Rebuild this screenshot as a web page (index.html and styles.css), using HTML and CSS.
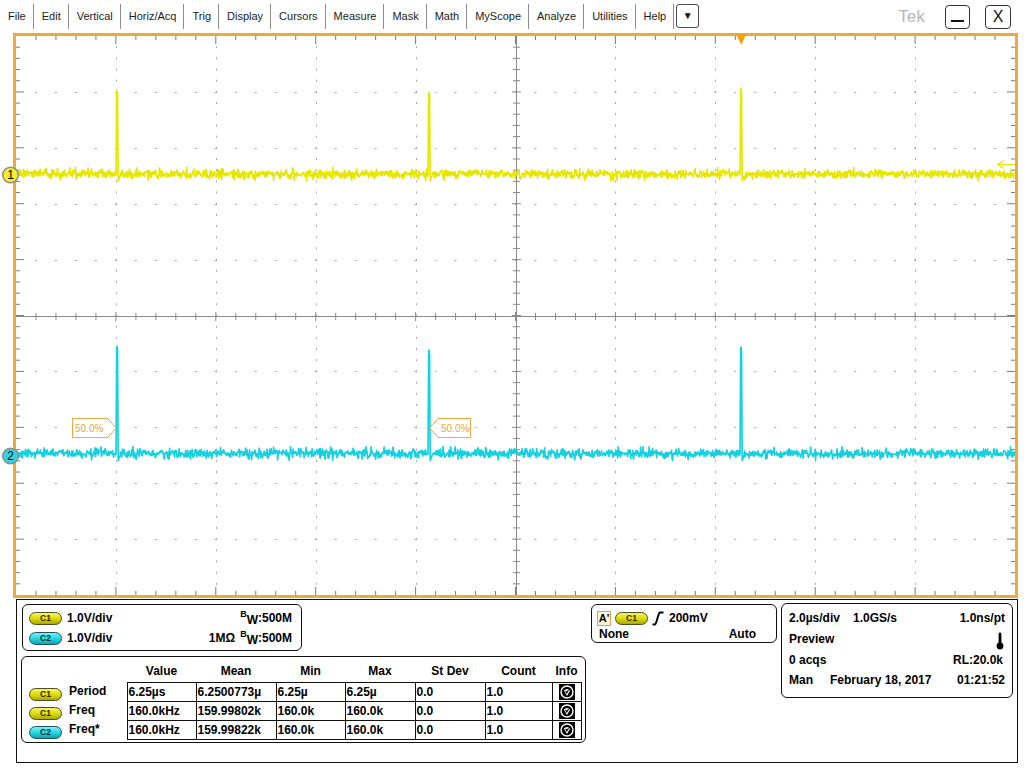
FILE: index.html
```html
<!DOCTYPE html>
<html>
<head>
<meta charset="utf-8">
<link rel="stylesheet" href="styles.css">
</head>
<body>
<div class="menubar">
  <div class="menu">
    <span class="mi">File</span><span class="mi">Edit</span><span class="mi">Vertical</span><span class="mi">Horiz/Acq</span><span class="mi">Trig</span><span class="mi">Display</span><span class="mi">Cursors</span><span class="mi">Measure</span><span class="mi">Mask</span><span class="mi">Math</span><span class="mi">MyScope</span><span class="mi">Analyze</span><span class="mi">Utilities</span><span class="mi">Help</span>
  </div>
  <div class="dd">&#9660;</div>
  <div class="tek">Tek</div>
  <div class="winbtn minb"><span class="minbar"></span></div>
  <div class="winbtn closeb">X</div>
</div>

<div class="grat">
  <svg id="scope" class="scope" width="999" height="559" viewBox="16 36 999 559"></svg>
</div>

<div class="bottom">
  <div class="leftcol">
    <div class="chpanel">
      <div class="chrow"><span class="badge yel">C1</span><span class="val">1.0V/div</span><span class="bw"><span class="bsup">B</span><span class="wsub">W</span>:500M</span></div>
      <div class="chrow"><span class="badge cya">C2</span><span class="val">1.0V/div</span><span class="imp">1MΩ</span><span class="bw bw2"><span class="bsup">B</span><span class="wsub">W</span>:500M</span></div>
    </div>
    <div class="meas">
      <table class="mt">
        <colgroup>
          <col class="c-lab"><col class="c-val"><col class="c-mean"><col class="c-min"><col class="c-max"><col class="c-sd"><col class="c-cnt"><col class="c-info">
        </colgroup>
        <tr class="hdr"><th></th><th>Value</th><th>Mean</th><th>Min</th><th>Max</th><th>St Dev</th><th>Count</th><th>Info</th></tr>
        <tr class="dr"><td class="lab"><span class="badge yel">C1</span>Period</td><td class="v">6.25µs</td><td class="v">6.2500773µ</td><td class="v">6.25µ</td><td class="v">6.25µ</td><td class="v">0.0</td><td class="v">1.0</td><td class="v info"><svg class="ico" width="16" height="16" viewBox="0 0 16 16"><rect width="16" height="16" fill="#000"/><circle cx="8" cy="8" r="6" fill="none" stroke="#fff" stroke-width="1.4"/><path d="M4.9 6.4 Q8 3.4 11.1 6.4 L8 12 Z" fill="#fff"/><path d="M6.6 6.9 L7.8 8.9 L9.5 5.9" fill="none" stroke="#000" stroke-width="1.1"/></svg></td></tr>
        <tr class="dr"><td class="lab"><span class="badge yel">C1</span>Freq</td><td class="v">160.0kHz</td><td class="v">159.99802k</td><td class="v">160.0k</td><td class="v">160.0k</td><td class="v">0.0</td><td class="v">1.0</td><td class="v info"><svg class="ico" width="16" height="16" viewBox="0 0 16 16"><rect width="16" height="16" fill="#000"/><circle cx="8" cy="8" r="6" fill="none" stroke="#fff" stroke-width="1.4"/><path d="M4.9 6.4 Q8 3.4 11.1 6.4 L8 12 Z" fill="#fff"/><path d="M6.6 6.9 L7.8 8.9 L9.5 5.9" fill="none" stroke="#000" stroke-width="1.1"/></svg></td></tr>
        <tr class="dr"><td class="lab"><span class="badge cya">C2</span>Freq*</td><td class="v">160.0kHz</td><td class="v">159.99822k</td><td class="v">160.0k</td><td class="v">160.0k</td><td class="v">0.0</td><td class="v">1.0</td><td class="v info"><svg class="ico" width="16" height="16" viewBox="0 0 16 16"><rect width="16" height="16" fill="#000"/><circle cx="8" cy="8" r="6" fill="none" stroke="#fff" stroke-width="1.4"/><path d="M4.9 6.4 Q8 3.4 11.1 6.4 L8 12 Z" fill="#fff"/><path d="M6.6 6.9 L7.8 8.9 L9.5 5.9" fill="none" stroke="#000" stroke-width="1.1"/></svg></td></tr>
      </table>
    </div>
  </div>

  <div class="trig">
    <div class="trow"><span class="abox">A'</span><span class="badge yel">C1</span><svg class="edge" width="12" height="15" viewBox="0 0 12 15"><path d="M0.5 13.5 H3 C4.5 13.5 6 2 8 1.5 H11.5" fill="none" stroke="#000" stroke-width="2"/></svg><span class="tlev">200mV</span></div>
    <div class="trow2"><span>None</span><span>Auto</span></div>
  </div>

  <div class="horiz">
    <div class="hrow"><span>2.0µs/div</span><span class="gs">1.0GS/s</span><span class="rt">1.0ns/pt</span></div>
    <div class="hrow"><span>Preview</span><svg class="thermo" width="8" height="18" viewBox="0 0 8 18"><rect x="2.6" y="0.5" width="2.8" height="13" rx="1.4" fill="#000"/><circle cx="4" cy="14" r="3.4" fill="#000"/></svg></div>
    <div class="hrow"><span>0 acqs</span><span class="rt rl">RL:20.0k</span></div>
    <div class="hrow"><span>Man</span><span class="date">February 18, 2017</span><span class="rt">01:21:52</span></div>
  </div>
</div>
<script src="script.js"></script>
</body>
</html>
```

FILE: styles.css
```css
* { box-sizing: border-box; }
html, body { margin: 0; padding: 0; }
body {
  width: 1024px;
  height: 768px;
  overflow: hidden;
  background: #fff;
  font-family: "Liberation Sans", Arial, sans-serif;
  color: #000;
}

/* ---------- menu bar ---------- */
.menubar {
  display: flex;
  align-items: flex-start;
  height: 33px;
}
.menu { display: flex; margin-top: 4px; }
.mi {
  height: 25px;
  line-height: 25px;
  padding: 0 7px 0 8px;
  border-right: 1px solid #8c8c8c;
  font-size: 11px;
  color: #1a1a1a;
}
.dd {
  margin: 4px 0 0 2px;
  width: 23px;
  height: 24px;
  border: 1px solid #4a4a4a;
  border-radius: 3px;
  font-size: 10px;
  line-height: 22px;
  text-align: center;
  color: #111;
}
.tek {
  margin: 6px 20px 0 auto;
  font-size: 16.5px;
  line-height: 20px;
  color: #b4b4b4;
  letter-spacing: 0.3px;
}
.winbtn {
  margin-top: 5px;
  height: 24px;
  border: 1.5px solid #333;
  border-radius: 4px;
  display: flex;
  align-items: center;
  justify-content: center;
}
.minb { width: 25px; margin-right: 15px; }
.minbar {
  display: block;
  width: 13px;
  height: 2.5px;
  background: #111;
  margin-top: 8px;
}
.closeb {
  width: 26px;
  margin-right: 13px;
  font-size: 16px;
  color: #111;
}

/* ---------- graticule ---------- */
.grat {
  margin-left: 13px;
  width: 1005px;
  height: 565px;
  border: 3px solid #f0a83e;
}
.scope { display: block; overflow: visible; }

/* ---------- bottom area ---------- */
.bottom {
  margin: 1px 0 0 16px;
  width: 1002px;
  height: 164px;
  border: 1px solid #111;
  padding: 4px 0 0 4px;
  display: flex;
  align-items: flex-start;
  gap: 4px;
  font-size: 12px;
  font-weight: bold;
}
.leftcol {
  width: 566px;
  display: flex;
  flex-direction: column;
  gap: 5px;
}
.chpanel {
  margin-left: 1px;
  width: 280px;
  height: 47px;
  border: 1px solid #111;
  border-radius: 6px;
  padding: 3px 9px 0 6px;
}
.chrow {
  display: flex;
  align-items: center;
  height: 20px;
}
.val { margin-left: 5px; }
.imp { margin-left: auto; margin-right: 5px; }
.bw { margin-left: auto; display: flex; align-items: baseline; }
.bw2 { margin-left: 0; }
.bsup { font-size: 9px; position: relative; top: -5px; }
.wsub { position: relative; top: 1.5px; }

.badge {
  display: inline-block;
  width: 33px;
  height: 13px;
  border-radius: 7px;
  border: 1px solid #4d4d26;
  font-size: 8.5px;
  line-height: 11px;
  text-align: center;
  color: #2a2a00;
  font-weight: bold;
  flex: none;
}
.yel { background: linear-gradient(#f6f66a, #d9d900 55%, #a8a800); }
.cya { background: linear-gradient(#7af0f6, #22d2e0 55%, #10a4b2); border-color: #245058; color: #003038; }

/* measurement table */
.meas {
  width: 565px;
  height: 87px;
  border: 1px solid #111;
  border-radius: 6px;
}
.mt {
  border-collapse: collapse;
  table-layout: fixed;
  width: 559px;
}
.c-lab { width: 105px; }
.c-val { width: 69px; }
.c-mean { width: 80px; }
.c-min { width: 69px; }
.c-max { width: 70px; }
.c-sd { width: 70px; }
.c-cnt { width: 67px; }
.c-info { width: 29px; }
.hdr th {
  height: 25px;
  padding: 3px 0 0 0;
  font-size: 12px;
  text-align: center;
  white-space: nowrap;
}
.dr td { height: 19px; padding: 0; white-space: nowrap; vertical-align: middle; }
.lab { padding: 2px 0 0 7px !important; }
.lab .badge { margin-right: 7px; vertical-align: -2px; }
.v {
  border: 1px solid #111;
  padding: 1px 0 0 1px !important;
  line-height: 17px;
}
.info { text-align: center; padding: 0 !important; }
.ico { display: block; margin: 0 auto; }

/* trigger panel */
.trig {
  width: 186px;
  height: 39px;
  border: 1px solid #111;
  border-radius: 6px;
  padding: 4px 20px 0 5px;
}
.trow {
  display: flex;
  align-items: center;
  gap: 4px;
  height: 18px;
}
.abox {
  width: 14px;
  height: 15px;
  border: 1px solid #e8a04a;
  background: #fbf4dc;
  font-size: 11px;
  line-height: 13px;
  text-align: center;
}
.edge { display: block; }
.tlev { margin-left: 1px; }
.trow2 {
  display: flex;
  justify-content: space-between;
  padding-left: 2px;
  height: 15px;
  line-height: 15px;
}

/* horizontal panel */
.horiz {
  margin-top: -1px;
  width: 232px;
  height: 95px;
  border: 1px solid #111;
  border-radius: 6px;
  padding: 4px 7px 0 7px;
}
.hrow {
  display: flex;
  align-items: center;
  height: 20.7px;
}
.gs { margin-left: 13px; }
.rt { margin-left: auto; }
.rl { margin-right: 2px; }
.date { margin-left: 17px; }
.thermo { margin-left: auto; margin-right: 1px; margin-top: 3px; display: block; }
```

FILE: script.js
```js
(function () {
  var svg = document.getElementById('scope');
  var X0 = 16, Y0 = 36, W = 999, H = 559;
  var dx = W / 10, dy = H / 10;
  var p = [];
  function rect(x, y, w, h, c) {
    p.push('<rect x="' + x.toFixed(2) + '" y="' + y.toFixed(2) + '" width="' + w + '" height="' + h + '" fill="' + c + '"/>');
  }
  var dot = '#a6a6a6';
  var i, k, x, y, len;
  for (i = 1; i < 10; i++) {
    if (i === 5) continue;
    x = Math.round(X0 + i * dx) + 0.5;
    for (k = 1; k < 50; k++) {
      y = Y0 + k * dy / 5;
      rect(x - 0.5, y - 1, 1, 2, dot);
    }
  }
  for (i = 1; i < 10; i++) {
    if (i === 5) continue;
    y = Math.round(Y0 + i * dy) + 0.5;
    for (k = 1; k < 50; k++) {
      x = X0 + k * dx / 5;
      rect(x - 1, y - 0.5, 2, 1, dot);
    }
  }
  var cx = Math.round(X0 + 5 * dx), cy = Math.round(Y0 + 5 * dy);
  var ax = '#8a8a8a';
  rect(cx, Y0, 1, H, ax);
  rect(X0, cy, W, 1, ax);
  for (k = 1; k < 50; k++) {
    y = Y0 + k * dy / 5;
    len = (k % 5 === 0) ? 4 : 3;
    rect(cx - len, y - 0.5, len * 2 + 1, 1, ax);
    x = X0 + k * dx / 5;
    rect(x - 0.5, cy - len, 1, len * 2 + 1, ax);
  }
  var tc = '#7a7a7a';
  for (k = 1; k < 50; k++) {
    len = (k % 5 === 0) ? 8 : 4;
    x = X0 + k * dx / 5;
    rect(x - 0.5, Y0, 1, len, tc);
    rect(x - 0.5, Y0 + H - len, 1, len, tc);
    y = Y0 + k * dy / 5;
    rect(X0, y - 0.5, len, 1, tc);
    rect(X0 + W - len, y - 0.5, len, 1, tc);
  }

  function rng(seed) {
    return function () {
      seed |= 0; seed = seed + 0x6D2B79F5 | 0;
      var t = Math.imul(seed ^ seed >>> 15, 1 | seed);
      t = t + Math.imul(t ^ t >>> 7, 61 | t) ^ t;
      return ((t ^ t >>> 14) >>> 0) / 4294967296;
    };
  }

  function trace(base, amp, spikes, color, seed, w) {
    var r = rng(seed), pts = [], xx = X0, si = 0;
    while (xx <= X0 + W) {
      var s = spikes[si];
      if (s && xx >= s[0] - 1) {
        pts.push((s[0] - 1) + ',' + (base + 1));
        pts.push((s[0] - 0.2) + ',' + s[1]);
        pts.push((s[0] + 0.4) + ',' + (s[1] + 3));
        pts.push((s[0] + 1.2) + ',' + (base + 7));
        pts.push((s[0] + 3) + ',' + (base + 2));
        xx = s[0] + 3.6; si++;
        continue;
      }
      var n = (r() + r() - 1) * amp;
      if (r() < 0.1) n = (r() - 0.5) * 2 * amp * 1.4;
      pts.push(xx.toFixed(1) + ',' + (base + n).toFixed(1));
      xx += 0.5;
    }
    var out = '';
    spikes.forEach(function (s) {
      out += '<line x1="' + (s[0] + 0.5) + '" y1="' + (s[1] + 4) + '" x2="' + (s[0] + 0.5) + '" y2="' + base + '" stroke="' + color + '" stroke-opacity="0.18" stroke-width="4"/>';
    });
    out += '<polyline points="' + pts.join(' ') + '" fill="none" stroke="' + color + '" stroke-width="' + w + '" stroke-linejoin="round"/>';
    return out;
  }

  p.push(trace(174, 5, [[117, 90], [429, 92], [741, 88]], '#e6e600', 11, 1.6));
  p.push(trace(453.5, 5.2, [[117, 346], [429, 350], [741, 347]], '#16d0e0', 23, 1.6));

  var oc = '#efa540';
  p.push('<polygon points="72.5,418.5 108,418.5 116,428 108,437.5 72.5,437.5" fill="#fff" fill-opacity="0.85" stroke="' + oc + '" stroke-width="1"/>');
  p.push('<text x="75" y="432" font-family="Liberation Sans, Arial, sans-serif" font-size="10" fill="' + oc + '">50.0%</text>');
  p.push('<polygon points="430,428 438,418.5 470.5,418.5 470.5,437.5 438,437.5" fill="#fff" fill-opacity="0.85" stroke="' + oc + '" stroke-width="1"/>');
  p.push('<text x="441" y="432" font-family="Liberation Sans, Arial, sans-serif" font-size="10" fill="' + oc + '">50.0%</text>');

  p.push('<polygon points="736.5,34.5 746,34.5 741.2,45" fill="#f6a000"/>');
  p.push('<line x1="998" y1="164.5" x2="1015" y2="164.5" stroke="#e6e600" stroke-width="1"/>');
  p.push('<polyline points="1004,160.5 997.5,164.5 1004,168.5" fill="none" stroke="#e6e600" stroke-width="1.2"/>');

  p.push('<circle cx="10.5" cy="175" r="7.8" fill="#f0ef2a" stroke="#8e8e8e" stroke-width="1.6"/>');
  p.push('<text x="10.5" y="179.2" text-anchor="middle" font-family="Liberation Sans, Arial, sans-serif" font-size="12" fill="#000">1</text>');
  p.push('<circle cx="10.5" cy="456" r="7.8" fill="#2ed6e2" stroke="#8e8e8e" stroke-width="1.6"/>');
  p.push('<text x="10.5" y="460.2" text-anchor="middle" font-family="Liberation Sans, Arial, sans-serif" font-size="12" fill="#000">2</text>');

  svg.innerHTML = p.join('');
})();
```
